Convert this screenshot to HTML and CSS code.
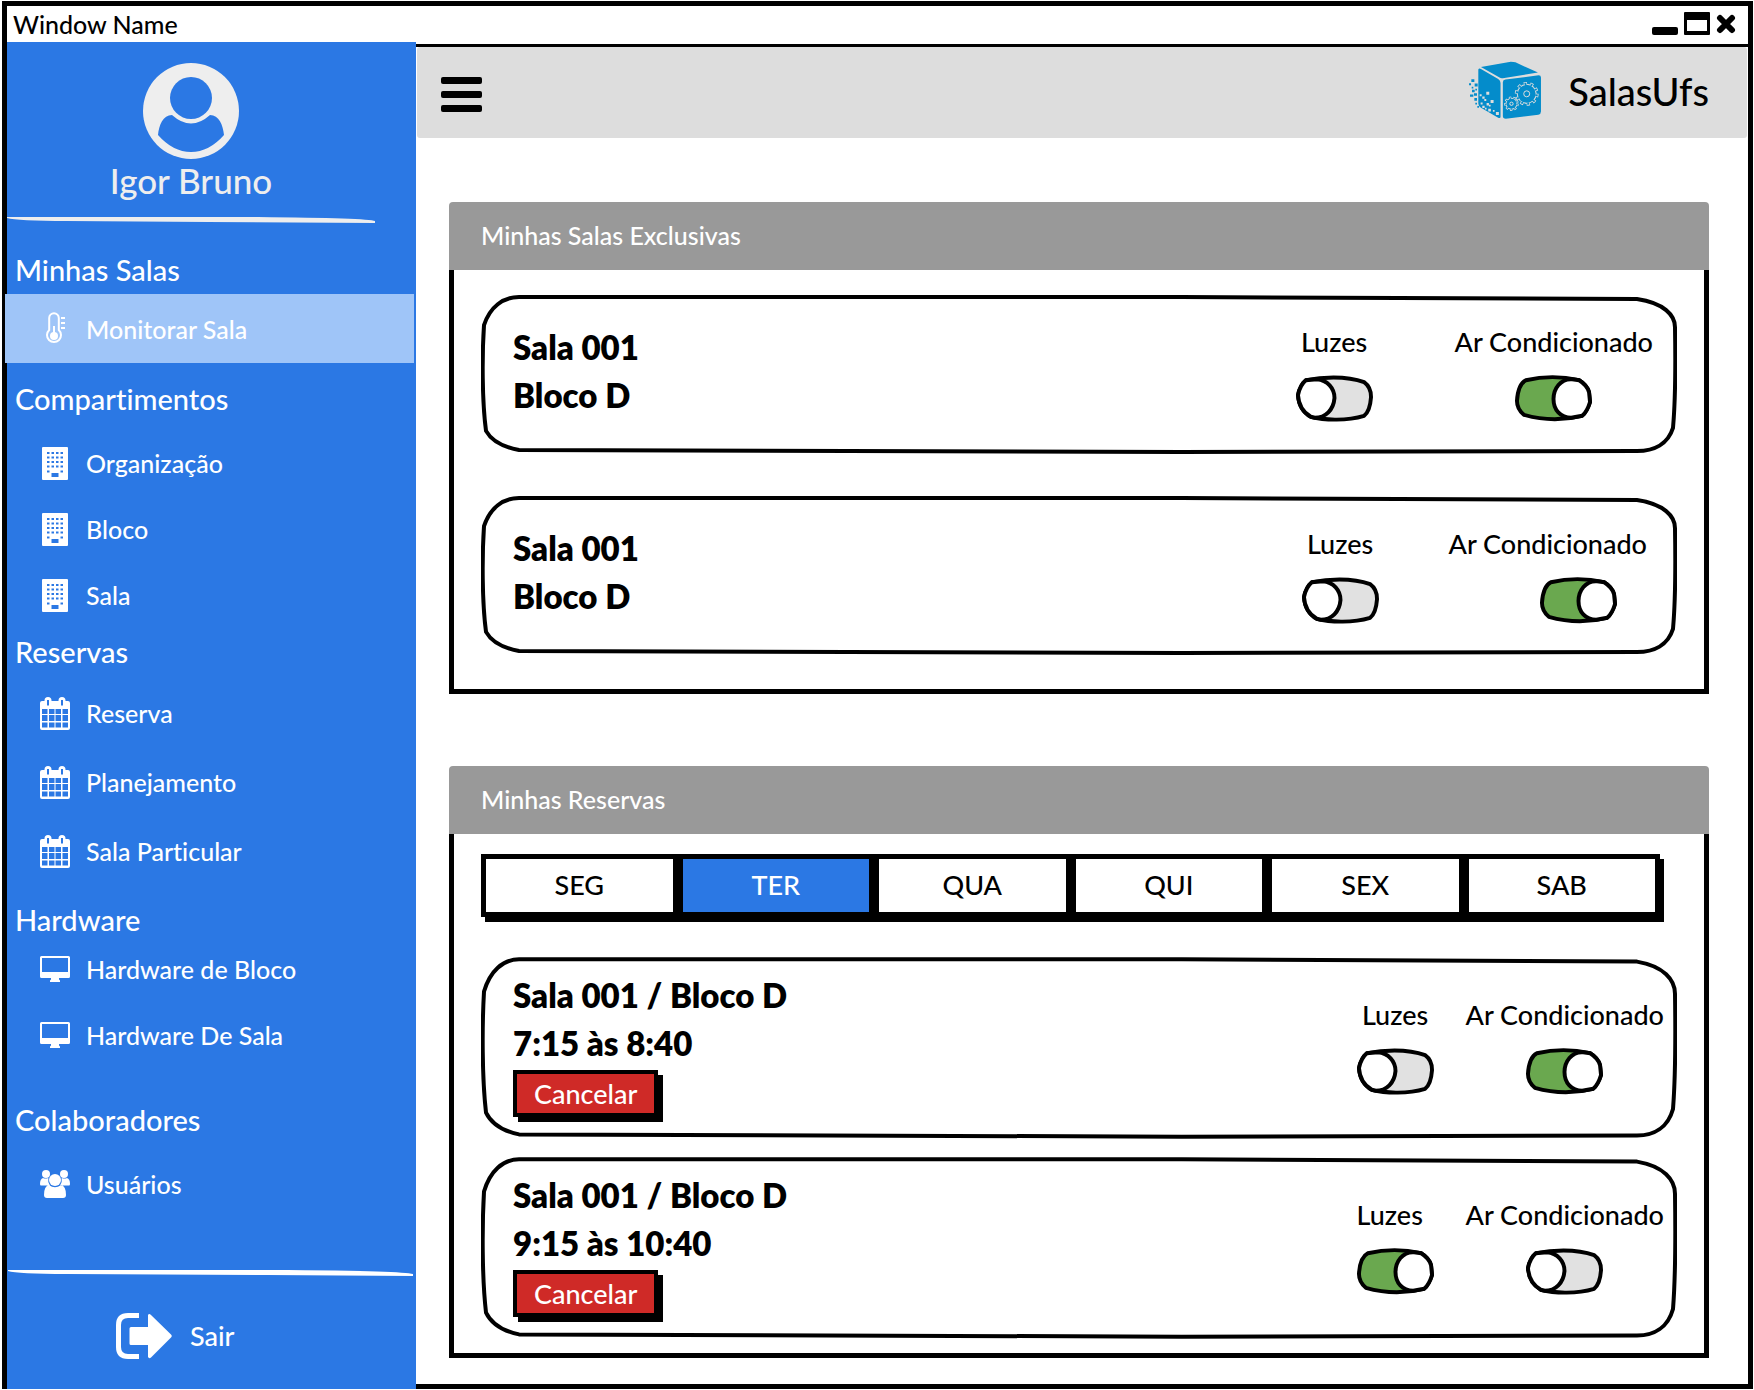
FILE: index.html
```html
<!DOCTYPE html>
<html lang="pt-BR">
<head>
<meta charset="utf-8">
<meta name="viewport" content="width=device-width, initial-scale=1">
<title>SalasUfs</title>
<link rel="stylesheet" href="styles.css">
</head>
<body>
<svg class="sprite" aria-hidden="true">
  <symbol id="i-building" viewBox="0 0 26 33">
    <path fill="currentColor" fill-rule="evenodd" d="M1 0H25Q26 0 26 1V32Q26 33 25 33H1Q0 33 0 32V1Q0 0 1 0ZM5 5V7H7.500V5ZM9.500 5V7H12V5ZM14 5V7H16.500V5ZM18.500 5V7H21V5ZM5 9.500V11.500H7.500V9.500ZM9.500 9.500V11.500H12V9.500ZM14 9.500V11.500H16.500V9.500ZM18.500 9.500V11.500H21V9.500ZM5 14V16H7.500V14ZM9.500 14V16H12V14ZM14 14V16H16.500V14ZM18.500 14V16H21V14ZM5 18.500V20.500H7.500V18.500ZM9.500 18.500V20.500H12V18.500ZM14 18.500V20.500H16.500V18.500ZM18.500 18.500V20.500H21V18.500ZM5 23.500V25.500H7.500V23.500ZM18.500 23.500V25.500H21V23.500ZM9.500 26V30H16.500V26Z"/>
  </symbol>
  <symbol id="i-calendar" viewBox="0 0 30 33">
    <path fill="currentColor" fill-rule="evenodd" d="M4.500 4V3.500A3.500 3.500 0 0 1 11.500 3.500V4H18.500V3.500A3.500 3.500 0 0 1 25.500 3.500V4H28Q30 4 30 6V31Q30 33 28 33H2Q0 33 0 31V6Q0 4 2 4ZM7 3V8.500H9V3ZM21 3V8.500H23V3ZM2 12V17H7.500V12ZM9 12V17H14.500V12ZM15.500 12V17H21V12ZM22.500 12V17H28V12ZM2 18V24H7.500V18ZM9 18V24H14.500V18ZM15.500 18V24H21V18ZM22.500 18V24H28V18ZM2 25.500V30.500H7.500V25.500ZM9 25.500V30.500H14.500V25.500ZM15.500 25.500V30.500H21V25.500ZM22.500 25.500V30.500H28V25.500Z"/>
  </symbol>
  <symbol id="i-monitor" viewBox="0 0 30 26">
    <path fill="currentColor" fill-rule="evenodd" d="M1.500 0H28.500Q30 0 30 1.500V20.500Q30 22 28.500 22H19V23.500L20 24.500V26H10V24.500L11 23.500V22H1.500Q0 22 0 20.500V1.500Q0 0 1.500 0ZM2 2V16H28V2Z"/>
  </symbol>
  <symbol id="i-users" viewBox="0 0 30 28">
    <g fill="currentColor">
      <circle cx="6" cy="4" r="4"/><circle cx="24" cy="4" r="4"/>
      <circle cx="15" cy="10" r="6"/>
      <path d="M3 8Q5 9 8.300 8Q7.500 12 10 15.500H1Q0 15.500 0 14Q0 9 3 8ZM27 8Q25 9 21.700 8Q22.500 12 20 15.500H29Q30 15.500 30 14Q30 9 27 8ZM9 15Q15 19.500 21 15Q26 16 26 25Q26 28 23 28H7Q4 28 4 25Q4 16 9 15Z"/>
    </g>
  </symbol>
  <symbol id="i-thermo" viewBox="0 0 18 33">
    <g fill="none" stroke="currentColor" stroke-width="2">
      <path d="M3.200 18V6A4.800 4.800 0 0 1 12.800 6V18A7 7 0 1 1 3.200 18Z"/>
      <path d="M8 14V24M15 6H19M15 11H19M15 16H19"/>
    </g>
    <circle cx="8" cy="24" r="4" fill="currentColor"/>
  </symbol>
  <symbol id="i-exit" viewBox="0 0 56 46">
    <path d="M23 2.500H12Q2.500 2.500 2.500 12V34Q2.500 43.500 12 43.500H23" fill="none" stroke="currentColor" stroke-width="5"/>
    <path d="M15 14H32V2Q33 0 35 2L55 21.500Q56.500 23 55 24.500L35 44.500Q33 46 32 44V32H15Q13.500 32 13.500 30.500V15.500Q13.500 14 15 14Z" fill="currentColor"/>
  </symbol>
</svg>

<div class="window">
  <header class="titlebar">
    <span class="titlebar__name">Window Name</span>
    <svg class="titlebar__controls" width="84" height="24" viewBox="0 0 84 24" role="img" aria-label="Minimizar, maximizar, fechar">
      <rect x="0" y="15" width="26" height="8" rx="2"/>
      <path fill-rule="evenodd" d="M33 0H57Q58 0 58 1V22Q58 23 57 23H33Q32 23 32 22V1Q32 0 33 0ZM35 8V19H55V8Z"/>
      <path d="M68 6L80 18M80 6L68 18" stroke="#000" stroke-width="6" stroke-linecap="round"/>
    </svg>
  </header>

  <div class="layout">
    <aside class="sidebar">
      <div class="profile">
        <svg class="profile__avatar" viewBox="0 0 96 96" aria-hidden="true">
          <circle cx="48" cy="48" r="48" fill="#eee"/>
          <circle cx="48" cy="35" r="21" fill="#2b78e4"/>
          <path d="M29 52Q48 69 67 52C76 52 80 62 81 72Q66 89 48 89T15 72C16 62 20 52 29 52Z" fill="#2b78e4"/>
        </svg>
        <span class="profile__name">Igor Bruno</span>
      </div>

      <nav class="nav">
        <h2 class="nav__title">Minhas Salas</h2>
        <ul class="menu">
          <li><a class="menu__link menu__link--active" href="#monitorar"><svg class="menu__icon" width="18" height="33"><use href="#i-thermo"/></svg>Monitorar Sala</a></li>
        </ul>
        <h2 class="nav__title">Compartimentos</h2>
        <ul class="menu menu--spaced">
          <li><a class="menu__link" href="#organizacao"><svg class="menu__icon" width="26" height="33"><use href="#i-building"/></svg>Organização</a></li>
          <li><a class="menu__link" href="#bloco"><svg class="menu__icon" width="26" height="33"><use href="#i-building"/></svg>Bloco</a></li>
          <li><a class="menu__link" href="#sala"><svg class="menu__icon" width="26" height="33"><use href="#i-building"/></svg>Sala</a></li>
        </ul>
        <h2 class="nav__title nav__title--tight">Reservas</h2>
        <ul class="menu menu--loose">
          <li><a class="menu__link" href="#reserva"><svg class="menu__icon" width="30" height="33"><use href="#i-calendar"/></svg>Reserva</a></li>
          <li><a class="menu__link" href="#planejamento"><svg class="menu__icon" width="30" height="33"><use href="#i-calendar"/></svg>Planejamento</a></li>
          <li><a class="menu__link" href="#particular"><svg class="menu__icon" width="30" height="33"><use href="#i-calendar"/></svg>Sala Particular</a></li>
        </ul>
        <h2 class="nav__title">Hardware</h2>
        <ul class="menu">
          <li><a class="menu__link" href="#hw-bloco"><svg class="menu__icon" width="30" height="26"><use href="#i-monitor"/></svg>Hardware de Bloco</a></li>
          <li><a class="menu__link" href="#hw-sala"><svg class="menu__icon" width="30" height="26"><use href="#i-monitor"/></svg>Hardware De Sala</a></li>
        </ul>
        <h2 class="nav__title nav__title--far">Colaboradores</h2>
        <ul class="menu menu--spaced">
          <li><a class="menu__link" href="#usuarios"><svg class="menu__icon" width="30" height="28"><use href="#i-users"/></svg>Usuários</a></li>
        </ul>
      </nav>

      <div class="logout">
        <a class="logout__link" href="#sair"><svg width="56" height="46" aria-hidden="true"><use href="#i-exit"/></svg>Sair</a>
      </div>
    </aside>

    <main class="main">
      <div class="topbar">
        <button class="burger" type="button" aria-label="Menu"><span></span><span></span><span></span></button>
        <a class="brand" href="#inicio">
          <svg class="brand__logo" viewBox="204 184 220 178" aria-hidden="true">
            <g fill="#048ccb">
              <path d="M240 202L330 186Q338 186 344 188L412 219L306 236Q300 237 296 234Z"/>
              <path d="M232 210Q234 204 240 208L292 238Q299 242 299 250V352Q299 358 292 355L240 325Q232 320 232 312Z"/>
              <path d="M306 248Q306 241 314 240L414 227Q421 227 421 234V336Q421 344 413 346L315 358Q306 358 306 350Z"/>
              <path d="M211 239h9v8h-9zM204 251h6v6h-6zM221 252h9v9h-9zM212 262h5v5h-5zM223 268h5v5h-5zM213 271h8v7h-8zM207 285h10v7h-10zM219 281h9v8h-9zM220 296h8v8h-8zM223 310h5v5h-5zM229 320h5v5h-5z"/>
            </g>
            <path fill="#ddd" d="M256 277h9v9h-9zM236 284h6v6h-6zM244 291h7v7h-7zM250 299h6v6h-6zM269 302h9v9h-9zM239 309h6v6h-6zM257 311h7v7h-7zM244 319h7v7h-7zM252 325h5v5h-5zM264 316h5v5h-5zM262 328h8v8h-8zM276 332h5v5h-5zM285 338h9v9h-9z"/>
            <g fill="none">
              <circle cx="378" cy="283" r="30" fill="#ddd"/>
              <circle cx="378" cy="283" r="31" stroke="#ddd" stroke-width="10" stroke-dasharray="9.480 10"/>
              <circle cx="378" cy="283" r="27" fill="#048ccb"/>
              <circle cx="378" cy="283" r="30" stroke="#048ccb" stroke-width="7" stroke-dasharray="5.500 13.350" stroke-dashoffset="-1.800"/>
              <circle cx="378" cy="283" r="9" stroke="#ddd" stroke-width="3"/>
              <circle cx="332" cy="313" r="18" fill="#ddd"/>
              <circle cx="332" cy="313" r="18" stroke="#ddd" stroke-width="8" stroke-dasharray="6.500 6.070"/>
              <circle cx="332" cy="313" r="15" fill="#048ccb"/>
              <circle cx="332" cy="313" r="17" stroke="#048ccb" stroke-width="5" stroke-dasharray="3.400 8.470" stroke-dashoffset="-1.400"/>
              <circle cx="332" cy="313" r="5" stroke="#ddd" stroke-width="3"/>
            </g>
          </svg>
          SalasUfs
        </a>
      </div>

      <div class="content">
        <section class="panel">
          <h1 class="panel__title">Minhas Salas Exclusivas</h1>
          <div class="panel__body panel__body--rooms">
            <article class="card">
              <div class="room">
                <p>Sala 001</p>
                <p>Bloco D</p>
              </div>
              <div class="switches switches--first">
                <label class="switch">Luzes<input type="checkbox"></label>
                <label class="switch">Ar Condicionado<input type="checkbox" checked></label>
              </div>
            </article>
            <article class="card">
              <div class="room">
                <p>Sala 001</p>
                <p>Bloco D</p>
              </div>
              <div class="switches switches--second">
                <label class="switch">Luzes<input type="checkbox"></label>
                <label class="switch switch--end">Ar Condicionado<input type="checkbox" checked></label>
              </div>
            </article>
          </div>
        </section>

        <section class="panel">
          <h1 class="panel__title">Minhas Reservas</h1>
          <div class="panel__body panel__body--bookings">
            <div class="days">
              <button class="day" type="button">SEG</button>
              <button class="day day--active" type="button" aria-pressed="true">TER</button>
              <button class="day" type="button">QUA</button>
              <button class="day" type="button">QUI</button>
              <button class="day" type="button">SEX</button>
              <button class="day" type="button">SAB</button>
            </div>
            <article class="card">
              <div class="room">
                <p>Sala 001 / Bloco D</p>
                <p>7:15 às 8:40</p>
                <button class="cancel" type="button">Cancelar</button>
              </div>
              <div class="switches">
                <label class="switch">Luzes<input type="checkbox"></label>
                <label class="switch">Ar Condicionado<input type="checkbox" checked></label>
              </div>
            </article>
            <article class="card">
              <div class="room">
                <p>Sala 001 / Bloco D</p>
                <p>9:15 às 10:40</p>
                <button class="cancel" type="button">Cancelar</button>
              </div>
              <div class="switches">
                <label class="switch switch--start">Luzes<input type="checkbox" checked></label>
                <label class="switch">Ar Condicionado<input type="checkbox"></label>
              </div>
            </article>
          </div>
        </section>
      </div>
    </main>
  </div>
</div>
</body>
</html>
```
FILE: styles.css
```css
* {
  box-sizing: border-box;
}

body {
  margin: 0;
  background: #fff;
  color: #000;
  font-family: Lato, "Open Sans", sans-serif;
  font-size: 25px;
  font-weight: 500;
  font-variant-ligatures: none;
  line-height: 32px;
}

h1, h2, p, ul {
  margin: 0;
  padding: 0;
  font-size: inherit;
  font-weight: inherit;
}

ul {
  list-style: none;
}

a {
  color: inherit;
  text-decoration: none;
}

button {
  font: inherit;
  cursor: pointer;
}

.sprite {
  display: none;
}

/* Window frame */
.window {
  display: flex;
  flex-direction: column;
  min-height: 100vh;
  padding: 1px 1px 1px 2px;
}

.titlebar {
  display: flex;
  align-items: center;
  justify-content: space-between;
  height: 41px;
  padding: 0 12px 0 6px;
  border: 5px solid #000;
  border-bottom: 0;
}

.titlebar__controls {
  display: block;
}

.layout {
  display: flex;
  flex: 1;
  border: solid #000;
  border-width: 0 5px;
}

/* Sidebar */
.sidebar {
  display: flex;
  flex-direction: column;
  flex: 0 0 409px;
  background: #2b78e4;
  color: #fff;
}

.profile {
  display: flex;
  flex-direction: column;
  align-items: center;
  width: 90%;
  padding: 21px 0 22px;
  color: #eee;
  font-size: 35px;
  line-height: 42px;
  background: url("data:image/svg+xml,%3Csvg xmlns='http://www.w3.org/2000/svg' viewBox='0 0 367 6' preserveAspectRatio='none'%3E%3Cpath d='M0 0L250 0Q360 1 367 4V6L200 5L60 4Q10 4 0 1Z' fill='%23eee'/%3E%3C/svg%3E") bottom / 100% 6px no-repeat;
}

.profile__avatar {
  width: 96px;
  height: 96px;
}

.nav {
  flex: 1;
}

.nav__title {
  padding: 0 8px;
  margin-top: 20px;
  font-size: 29px;
}

.nav__title:first-child {
  margin: 31px 0 8px;
}

.nav__title--tight {
  margin-top: 8px;
}

.nav__title--far {
  margin-top: 36px;
}

.menu--spaced {
  padding-top: 15px;
}

.menu--loose {
  display: grid;
  gap: 3px;
  padding-top: 12px;
}

.menu__link {
  display: flex;
  align-items: center;
  height: 66px;
  padding-left: 33px;
}

.menu__link--active {
  height: 69px;
  margin: 0 2px 0 -2px;
  padding-left: 35px;
  background: #9fc5f8;
}

.menu__icon {
  flex: none;
  width: 30px;
  margin-right: 16px;
}

.logout {
  padding: 43px 0 24px 109px;
  background: url("data:image/svg+xml,%3Csvg xmlns='http://www.w3.org/2000/svg' viewBox='0 0 408 6' preserveAspectRatio='none'%3E%3Cpath d='M1 0L280 0Q395 1 405 4V6L260 5L60 4Q10 4 1 1Z' fill='%23fff'/%3E%3C/svg%3E") top / 100% 6px no-repeat;
}

.logout__link {
  display: inline-flex;
  align-items: center;
  gap: 18px;
  font-size: 27px;
}

/* Main area */
.main {
  flex: 1;
  min-width: 0;
  margin-top: 2px;
  border: solid #000;
  border-width: 3px 0 5px;
}

.topbar {
  display: flex;
  align-items: center;
  justify-content: space-between;
  height: 91px;
  margin: 0 1px;
  padding: 0 38px 0 24px;
  border-radius: 3px;
  background: #ddd;
}

.burger {
  display: grid;
  gap: 7px;
  width: 41px;
  padding: 3px 0 0;
  border: 0;
  background: none;
}

.burger span {
  height: 7px;
  border-radius: 2px;
  background: #000;
}

.brand {
  display: flex;
  align-items: center;
  gap: 26px;
  padding-bottom: 4px;
  font-size: 38px;
}

.brand__logo {
  width: 73px;
  height: 59px;
}

.content {
  display: grid;
  gap: 72px;
  padding: 64px 39px 26px 33px;
}

.panel__title {
  padding: 17px 32px 19px;
  border-radius: 4px 4px 0 0;
  background: #999;
  color: #fff;
}

.panel__body {
  display: grid;
  border: solid #000;
  border-width: 0 5px 5px;
}

.panel__body--rooms {
  gap: 42px;
  padding: 25px 27px 34px;
}

.panel__body--bookings {
  gap: 18px;
  padding: 20px 27px 14px;
}

/* Hand-drawn card outline, stretched to the card */
.card {
  display: flex;
  justify-content: space-between;
  align-items: flex-start;
  padding-left: 32px;
  background: url("data:image/svg+xml,%3Csvg xmlns='http://www.w3.org/2000/svg' viewBox='0 0 1195 158' preserveAspectRatio='none'%3E%3Cpath d='M38 2L700 2L1155 4C1182 8 1193 20 1193 32C1194 90 1193 110 1191 132C1186 148 1172 155 1155 155L700 156L38 154C22 151 10 144 5 135C1 105 1 60 3 30C9 12 22 2 38 2Z' fill='none' stroke='%23000' stroke-width='4' vector-effect='non-scaling-stroke'/%3E%3C/svg%3E") center / 100% 100% no-repeat;
}

.room {
  padding: 14px 0 22px;
  font-size: 33px;
  font-weight: 800;
  line-height: 48px;
}

.panel__body--rooms .room {
  padding: 28px 0 35px;
}

.cancel {
  display: block;
  height: 47px;
  margin-top: 3px;
  padding: 0 17px;
  border: 4px solid #000;
  background: #cf2a27;
  box-shadow: 5px 5px 0 #000;
  color: #fff;
  font-size: 27px;
  font-weight: 500;
  line-height: 32px;
}

.switches {
  display: flex;
  gap: 32px;
  padding: 42px 13px 0 0;
  font-size: 27px;
}

.switches--first {
  gap: 82px;
  padding: 31px 24px 0 0;
}

.switches--second {
  gap: 70px;
  padding: 32px 30px 0 0;
}

.switch {
  display: flex;
  flex-direction: column;
  align-items: center;
  gap: 17px;
}

.switch--start {
  align-items: flex-start;
}

.switch input {
  appearance: none;
  width: 77px;
  height: 47px;
  margin: 0;
  background: url("data:image/svg+xml,%3Csvg xmlns='http://www.w3.org/2000/svg' viewBox='0 0 78 47'%3E%3Cg stroke='%23000' stroke-width='4' stroke-linejoin='round'%3E%3Cpath d='M10 5C25 2 50 0 69 7Q76 12 76 22Q75 36 69 41C52 46 30 46 15 42Q3 35 2 20Q4 10 10 5Z' fill='%23e1e1e1'/%3E%3Cpath d='M21 4C32 5 39 13 39 23C38 35 30 43 19 43L15 42Q3 35 2 20Q4 10 10 5Z' fill='%23fff'/%3E%3C/g%3E%3C/svg%3E") center / 100% 100% no-repeat;
}

.switch input:checked {
  background-image: url("data:image/svg+xml,%3Csvg xmlns='http://www.w3.org/2000/svg' viewBox='0 0 78 47'%3E%3Cg stroke='%23000' stroke-width='4' stroke-linejoin='round'%3E%3Cpath d='M11 5C28 1 48 1 65 5Q73 10 75 17L76 27Q73 37 68 41C48 46 30 46 9 40Q2 34 2 26Q3 9 11 5Z' fill='%236aa84f'/%3E%3Cpath d='M58 4C46 3 39 14 39 24C39 35 46 43 57 43L68 41Q73 37 76 27L75 17Q73 10 65 5Z' fill='%23fff'/%3E%3C/g%3E%3C/svg%3E");
}

.switch--end input {
  align-self: flex-end;
  margin-right: 30px;
}

/* Weekday picker */
.days {
  display: grid;
  grid-template-columns: repeat(6, 1fr);
  margin: 0 17px 22px 0;
}

.day {
  height: 63px;
  padding: 0 0 2px;
  border: 5px solid #000;
  background: #fff;
  box-shadow: 4px 5px 0 #000;
  color: #000;
  font-size: 27px;
}

.day--active {
  background: #2b78e4;
  color: #fff;
}
```
